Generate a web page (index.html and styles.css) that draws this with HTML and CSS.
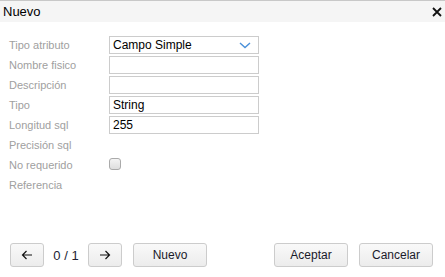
FILE: index.html
```html
<!DOCTYPE html>
<html lang="es">
<head>
    <meta charset="UTF-8">
    <title>Nuevo</title>
    <link rel="stylesheet" href="styles.css">
</head>
<body>
    <div class="dialog">
        <div class="titlebar">
            <span class="title">Nuevo</span>
            <span class="close">
                <svg width="10" height="10" viewBox="0 0 10 10"><path d="M1 1L9 9M9 1L1 9" stroke="#111" stroke-width="1.8"/></svg>
            </span>
        </div>
        <div class="form">
            <div class="row">
                <label>Tipo atributo</label>
                <div class="field select">
                    <span>Campo Simple</span>
                    <svg width="12" height="7" viewBox="0 0 12 7"><path d="M1 1L6 5.5L11 1" fill="none" stroke="#4a90d9" stroke-width="1.4"/></svg>
                </div>
            </div>
            <div class="row">
                <label>Nombre fisico</label>
                <div class="field"></div>
            </div>
            <div class="row">
                <label>Descripción</label>
                <div class="field"></div>
            </div>
            <div class="row">
                <label>Tipo</label>
                <div class="field">String</div>
            </div>
            <div class="row">
                <label>Longitud sql</label>
                <div class="field">255</div>
            </div>
            <div class="row">
                <label>Precisión sql</label>
            </div>
            <div class="row">
                <label>No requerido</label>
                <div class="check"></div>
            </div>
            <div class="row">
                <label>Referencia</label>
            </div>
        </div>
        <div class="footer">
            <button class="btn small">
                <svg width="12" height="10" viewBox="0 0 12 10"><path d="M11 5H1.5M5.5 1L1.5 5L5.5 9" fill="none" stroke="#111" stroke-width="1.2"/></svg>
            </button>
            <span class="pager">0 / 1</span>
            <button class="btn small">
                <svg width="12" height="10" viewBox="0 0 12 10"><path d="M1 5H10.5M6.5 1L10.5 5L6.5 9" fill="none" stroke="#111" stroke-width="1.2"/></svg>
            </button>
            <button class="btn wide new">Nuevo</button>
            <span class="spacer"></span>
            <button class="btn wide">Aceptar</button>
            <button class="btn wide">Cancelar</button>
        </div>
    </div>
</body>
</html>
```

FILE: styles.css
```css
body{
    margin: 0;
    font-family: "Liberation Sans", Arial, sans-serif;
    background: #fff;
}
.dialog{
    width: 445px;
    height: 277px;
    display: flex;
    flex-direction: column;
    border-top: 1px solid #c8c8c8;
    box-sizing: border-box;
}
.titlebar{
    height: 21px;
    background: #f5f5f5;
    display: flex;
    align-items: center;
    justify-content: space-between;
    padding: 0 3px 0 3px;
}
.title{
    font-size: 13px;
    color: #000;
}
.close{
    display: flex;
}
.form{
    padding: 13px 0 0 9px;
    flex: 1;
}
.row{
    display: flex;
    align-items: center;
    height: 20px;
}
.row label{
    width: 100px;
    font-size: 11px;
    color: #a0a0a0;
}
.field{
    width: 145px;
    height: 16px;
    border: 1px solid #ccc;
    font-size: 12px;
    color: #000;
    padding-left: 3px;
    line-height: 16px;
    box-sizing: content-box;
}
.select{
    display: flex;
    justify-content: space-between;
    align-items: center;
    width: 138px;
    padding-right: 7px;
}
.check{
    width: 10px;
    height: 10px;
    border: 1px solid #aaa;
    border-radius: 3px;
    background: linear-gradient(#f4f4f4, #dedede);
    margin-top: -3px;
}
.footer{
    display: flex;
    align-items: center;
    padding: 0 12px 10px 10px;
}
.btn{
    height: 24px;
    border: 1px solid #ccc;
    border-radius: 3px;
    background: linear-gradient(#f9f9f9, #ececec);
    font-family: inherit;
    font-size: 12px;
    color: #1a1a2a;
    padding: 0;
    display: flex;
    align-items: center;
    justify-content: center;
}
.small{
    width: 34px;
}
.wide{
    width: 74px;
    margin-left: 11px;
}
.pager{
    font-size: 13px;
    color: #223;
    width: 44px;
    text-align: center;
}
.spacer{
    flex: 1;
}
```
